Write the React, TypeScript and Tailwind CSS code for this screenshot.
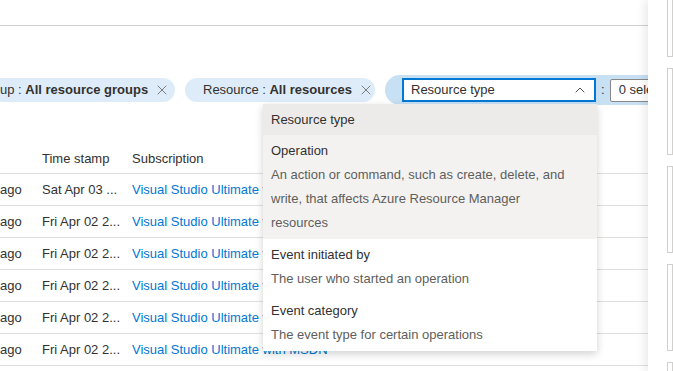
import { ChevronUp, X } from 'lucide-react'

const rows = [
  { time: 'Sat Apr 03 ...', sub: 'Visual Studio Ultimate with MSDN' },
  { time: 'Fri Apr 02 2...', sub: 'Visual Studio Ultimate with MSDN' },
  { time: 'Fri Apr 02 2...', sub: 'Visual Studio Ultimate with MSDN' },
  { time: 'Fri Apr 02 2...', sub: 'Visual Studio Ultimate with MSDN' },
  { time: 'Fri Apr 02 2...', sub: 'Visual Studio Ultimate with MSDN' },
  { time: 'Fri Apr 02 2...', sub: 'Visual Studio Ultimate with MSDN' },
]

const options = [
  { title: 'Operation', desc: 'An action or command, such as create, delete, and write, that affects Azure Resource Manager resources', hover: true },
  { title: 'Event initiated by', desc: 'The user who started an operation' },
  { title: 'Event category', desc: 'The event type for certain operations' },
]

export default function App() {
  return (
    <div className="flex h-[371px] w-[673px] overflow-hidden bg-white text-[13px] text-[#323130] font-['Segoe_UI','Liberation_Sans',sans-serif]">
      <div className="relative w-[648px] shrink-0 overflow-hidden">
        <div className="h-[26px] border-b border-[#d2d0ce]" />

        {/* filter pills */}
        <div className="mt-[49px] flex h-[30px] items-center whitespace-nowrap">
          <div className="flex h-[24px] w-[175px] shrink-0 items-center rounded-r-full bg-[#deecf9]">
            <span>up : <b className="font-bold">All resource groups</b></span>
            <X className="ml-[6px] h-[16px] w-[16px] text-[#605e5c]" strokeWidth={1.2} />
          </div>
          <div className="ml-[10px] flex h-[24px] w-[190px] shrink-0 items-center rounded-full bg-[#deecf9] pl-[18px]">
            <span>Resource : <b className="font-bold">All resources</b></span>
            <X className="ml-[6px] h-[16px] w-[16px] text-[#605e5c]" strokeWidth={1.2} />
          </div>
          <div className="ml-[10px] flex h-[30px] flex-1 items-center rounded-l-full bg-[#c7e0f4] pl-[17px]">
            <div className="flex h-[24px] w-[194px] shrink-0 items-center justify-between border-2 border-[#0078d4] bg-white pl-[7px] pr-[6px]">
              <span>Resource type</span>
              <ChevronUp className="h-[16px] w-[16px] text-[#323130]" strokeWidth={1.3} />
            </div>
            <span className="mx-[5px]">:</span>
            <div className="flex h-[23px] w-[80px] shrink-0 items-center rounded-[2px] border border-[#8a8886] bg-white pl-[8px]">0 selected</div>
          </div>
        </div>

        {/* table */}
        <div className="mt-[40px]">
          <div className="grid h-[29px] grid-cols-[42px_90px_1fr] items-center border-b border-[#e1dfdd] whitespace-nowrap">
            <span />
            <span>Time stamp</span>
            <span>Subscription</span>
          </div>
          {rows.map((r, i) => (
            <div key={i} className="grid h-[32px] grid-cols-[42px_90px_1fr] items-center border-b border-[#e1dfdd] whitespace-nowrap">
              <span>ago</span>
              <span>{r.time}</span>
              <span className="text-[#0078d4]">{r.sub}</span>
            </div>
          ))}
        </div>

        {/* dropdown */}
        <div className="absolute left-[263px] top-[104px] w-[334px] bg-white shadow-[0_3px_8px_rgba(0,0,0,0.18)]">
          <div className="flex h-[31px] items-center bg-[#edebe9] px-[8px]">Resource type</div>
          {options.map((o) => (
            <div key={o.title} className={`pb-[4px] pl-[8px] pr-[26px] pt-[4px] leading-[24px] ${o.hover ? 'bg-[#f3f2f1]' : ''}`}>
              <div>{o.title}</div>
              <div className="text-[#605e5c]">{o.desc}</div>
            </div>
          ))}
        </div>
      </div>

      {/* right side panel */}
      <div className="relative z-10 flex flex-1 flex-col gap-[11px] bg-white pl-[19px] shadow-[-4px_0_8px_rgba(0,0,0,0.08)]">
        <div className="-mt-[10px] h-[67px] shrink-0 border border-[#d2d0ce]" />
        <div className="h-[87px] shrink-0 border border-[#d2d0ce]" />
        <div className="h-[87px] shrink-0 border border-[#d2d0ce]" />
        <div className="h-[87px] shrink-0 border border-[#d2d0ce]" />
        <div className="h-[87px] shrink-0 border border-[#d2d0ce]" />
      </div>
    </div>
  )
}
